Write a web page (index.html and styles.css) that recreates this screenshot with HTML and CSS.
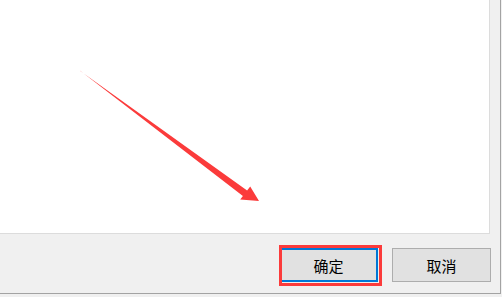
FILE: index.html
```html
<!DOCTYPE html>
<html lang="zh-CN">
<head>
<meta charset="utf-8">
<title>对话框</title>
<link rel="stylesheet" href="styles.css">
</head>
<body>
<div class="window">
  <div class="content"></div>
  <div class="footer">
    <div class="btn-wrap">
      <button class="btn btn-default" type="button">确定</button>
      <div class="annot"></div>
    </div>
    <button class="btn" type="button">取消</button>
  </div>
</div>
<svg class="arrow" width="502" height="297" viewBox="0 0 502 297" xmlns="http://www.w3.org/2000/svg">
  <polygon points="79.5,70.3 80.6,71.2 247.1,190.4 250.2,186.5 259,201 240.2,199.6 242.9,196" fill="#fb3b3b"/>
</svg>
</body>
</html>
```

FILE: styles.css
```css
html, body {
  margin: 0;
  padding: 0;
}
body {
  width: 502px;
  height: 297px;
  background: #f0f0f0;
  position: relative;
  overflow: hidden;
  font-family: "Noto Sans CJK SC", "Microsoft YaHei", sans-serif;
}
.window {
  width: 500px;
  height: 293px;
  background: #f0f0f0;
  border-right: 1px solid #a3a3a3;
  border-bottom: 1px solid #a3a3a3;
  display: flex;
  flex-direction: column;
}
.content {
  width: 489px;
  height: 233px;
  background: #ffffff;
  border-right: 1px solid #dcdcdc;
  border-bottom: 1px solid #dcdcdc;
  flex: none;
}
.footer {
  display: flex;
  justify-content: flex-end;
  gap: 14px;
  padding: 14px 9px 0 0;
}
.btn-wrap {
  position: relative;
}
.btn {
  box-sizing: border-box;
  width: 99px;
  height: 34px;
  margin: 0;
  padding: 0;
  background: #e1e1e1;
  border: 1px solid #adadad;
  border-radius: 0;
  font-family: "Noto Sans CJK SC", "Microsoft YaHei", sans-serif;
  font-size: 15px;
  color: #000;
  line-height: 1;
  display: block;
}
.btn-default {
  border: 2px solid #0078d7;
}
.annot {
  position: absolute;
  left: 0;
  right: -4px;
  top: -3px;
  bottom: -4px;
  border: 3px solid #fb3b3b;
  pointer-events: none;
}
.arrow {
  position: absolute;
  left: 0;
  top: 0;
}
```
